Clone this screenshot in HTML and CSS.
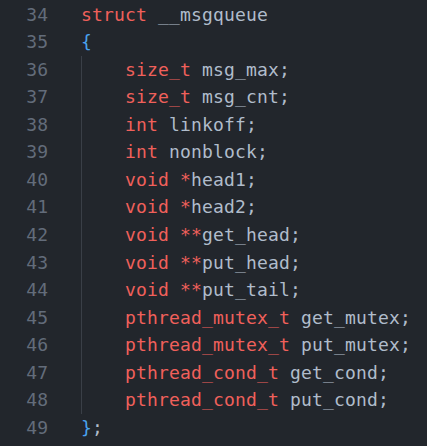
FILE: index.html
```html
<!DOCTYPE html>
<html>
<head>
<meta charset="utf-8">
<link rel="stylesheet" href="styles.css">
</head>
<body>
<div class="editor">
  <div class="gutter">
    <div class="ln">34</div><div class="ln">35</div><div class="ln">36</div><div class="ln">37</div><div class="ln">38</div><div class="ln">39</div><div class="ln">40</div><div class="ln">41</div><div class="ln">42</div><div class="ln">43</div><div class="ln">44</div><div class="ln">45</div><div class="ln">46</div><div class="ln">47</div><div class="ln">48</div><div class="ln">49</div>
  </div>
  <div class="code">
    <div class="line"><span class="kw">struct</span> <span class="id">__msgqueue</span></div>
    <div class="line"><span class="br">{</span></div>
    <div class="block">
      <div class="line"><span class="kw">size_t</span> <span class="id">msg_max;</span></div>
      <div class="line"><span class="kw">size_t</span> <span class="id">msg_cnt;</span></div>
      <div class="line"><span class="kw">int</span> <span class="id">linkoff;</span></div>
      <div class="line"><span class="kw">int</span> <span class="id">nonblock;</span></div>
      <div class="line"><span class="kw">void</span> <span class="kw">*</span><span class="id">head1;</span></div>
      <div class="line"><span class="kw">void</span> <span class="kw">*</span><span class="id">head2;</span></div>
      <div class="line"><span class="kw">void</span> <span class="kw">**</span><span class="id">get_head;</span></div>
      <div class="line"><span class="kw">void</span> <span class="kw">**</span><span class="id">put_head;</span></div>
      <div class="line"><span class="kw">void</span> <span class="kw">**</span><span class="id">put_tail;</span></div>
      <div class="line"><span class="kw">pthread_mutex_t</span> <span class="id">get_mutex;</span></div>
      <div class="line"><span class="kw">pthread_mutex_t</span> <span class="id">put_mutex;</span></div>
      <div class="line"><span class="kw">pthread_cond_t</span> <span class="id">get_cond;</span></div>
      <div class="line"><span class="kw">pthread_cond_t</span> <span class="id">put_cond;</span></div>
    </div>
    <div class="line"><span class="br">}</span><span class="id">;</span></div>
  </div>
</div>
</body>
</html>
```
FILE: styles.css
```css
html, body {
  margin: 0;
  padding: 0;
  background: #22262c;
  width: 427px;
  height: 446px;
  overflow: hidden;
}
.editor {
  display: flex;
  font-family: "DejaVu Sans Mono", "Liberation Mono", monospace;
  font-size: 18px;
  letter-spacing: 0.16px;
  line-height: 27.57px;
  padding-top: 0.5px;
}
.gutter {
  width: 48px;
  text-align: right;
  color: #636c7a;
  letter-spacing: 0;
  font-size: 18px;
}
.ln {
  height: 27.57px;
}
.code {
  margin-left: 33px;
}
.line {
  height: 27.57px;
  white-space: pre;
}
.block {
  border-left: 1px solid #3a3f47;
  padding-left: 43px;
}
.kw { color: #f0605b; }
.id { color: #b0bccb; }
.br { color: #4aa2ee; }
```
